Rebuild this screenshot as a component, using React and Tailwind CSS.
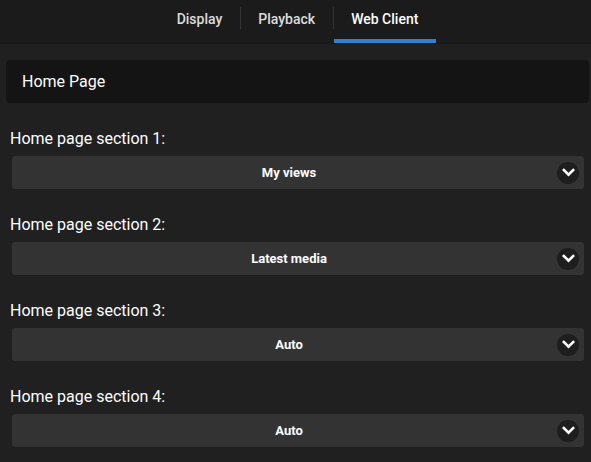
import { useState } from 'react';

const tabs = ['Display', 'Playback', 'Web Client'];

const sections = [
  ['Home page section 1:', 'My views'],
  ['Home page section 2:', 'Latest media'],
  ['Home page section 3:', 'Auto'],
  ['Home page section 4:', 'Auto'],
];

function Chevron() {
  return (
    <span className="absolute right-[5px] top-1/2 flex h-[22px] w-[22px] -translate-y-1/2 items-center justify-center rounded-full bg-[#1e1e1e]">
      <svg width="13" height="9" viewBox="0 0 13 9" fill="none">
        <path d="M1.8 2 L6.5 6.6 L11.2 2" stroke="#fff" strokeWidth="2.6" strokeLinecap="square" />
      </svg>
    </span>
  );
}

export default function App() {
  const [active, setActive] = useState('Web Client');
  return (
    <div className="h-[462px] w-full overflow-hidden bg-[#202020] text-white" style={{ fontFamily: 'Roboto, "Noto Sans", sans-serif' }}>
      <header className="flex h-[44px] justify-center border-b border-[#161616] bg-[#1b1b1b] pl-[4px]">
        {tabs.map((t, i) => (
          <div key={t} className="flex">
            {i > 0 && <div className="mt-[7px] h-[22px] w-px bg-[#333]" />}
            <button
              onClick={() => setActive(t)}
              className={`flex h-[43px] items-center border-b-4 px-[17.5px] text-[14px] font-medium ${active === t ? 'border-[#3182ce] text-white' : 'border-transparent text-[#dcdcdc]'}`}
            >
              {t}
            </button>
          </div>
        ))}
      </header>

      <div className="ml-[6px] mt-[16px] flex h-[43px] w-[583px] items-center rounded bg-[#141414] px-4 text-[16px]">
        Home Page
      </div>

      {sections.map(([label, value]) => (
        <div key={label} className="pt-[26px]">
          <div className="ml-[10px] h-[20px] text-[16px] leading-[20px]">{label}</div>
          <div className="relative ml-[12px] mt-[7px] flex h-[33px] w-[572px] items-center justify-center rounded-[3px] bg-[#333333] pr-[18px] text-[13px] font-bold">
            {value}
            <Chevron />
          </div>
        </div>
      ))}
    </div>
  );
}
